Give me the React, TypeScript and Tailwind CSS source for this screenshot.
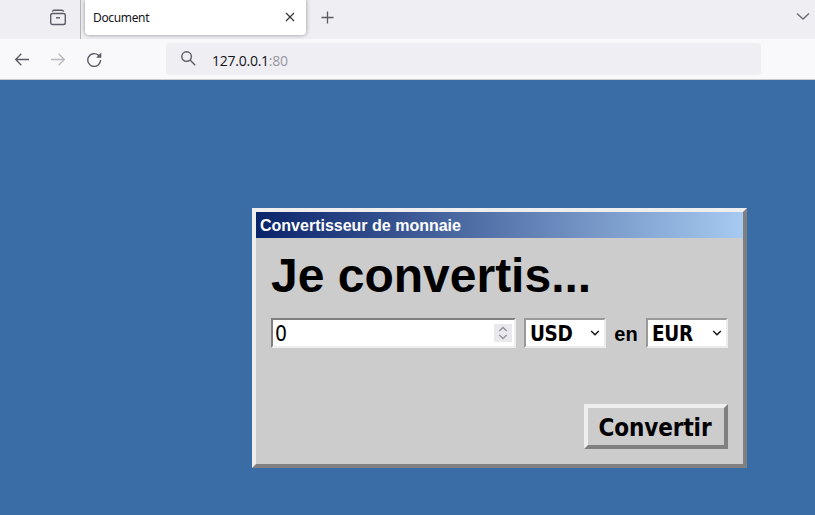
import React from "react";

const tahoma = "font-['DejaVu_Sans_Condensed','DejaVu_Sans',sans-serif] [font-stretch:75%]";

function TabBar() {
  return (
    <div className="flex h-[39px] bg-[#efeef3]">
      <div className="flex w-[81px] shrink-0 justify-end border-r border-[#b5b5ba] pr-[14px] pt-[9px]">
        <svg width="16" height="17" viewBox="0 0 16 17" fill="none" stroke="#5b5b66" strokeWidth="1.4">
          <path d="M2.3 2.5Q2.8 1.2 4.3 1.2H11.7Q13.2 1.2 13.7 2.5" />
          <rect x=".7" y="4.5" width="14.6" height="11" rx="1.8" />
          <path d="M6 8.8H10" />
        </svg>
      </div>
      <div className="ml-1 flex h-[35px] w-[221px] items-center justify-between rounded-b bg-white pl-2 pr-[11px] shadow-[0_0_4px_rgba(0,0,0,0.4)]">
        <span className="text-[12px] tracking-[-0.35px] text-[#15141a] font-['Noto_Sans',sans-serif]">Document</span>
        <svg width="10" height="10" viewBox="0 0 10 10" stroke="#333338" strokeWidth="1.2" className="-mt-px">
          <path d="M1 1L9 9M9 1L1 9" />
        </svg>
      </div>
      <svg width="13" height="13" viewBox="0 0 13 13" stroke="#5b5b66" strokeWidth="1.3" className="ml-[15px] mt-[11px]">
        <path d="M6.5.5V12.5M.5 6.5H12.5" />
      </svg>
      <svg width="14" height="9" viewBox="0 0 14 9" fill="none" stroke="#6b6b75" strokeWidth="1.4" className="ml-auto mr-[5px] mt-[12px]">
        <path d="M1 1.5L7 7L13 1.5" />
      </svg>
    </div>
  );
}

function NavBar() {
  return (
    <div className="flex h-[41px] border-b border-[#cccccf] bg-[#f9f9fb]">
      <div className="flex w-[166px] shrink-0 items-center gap-[22px] pl-[15px]">
        <svg width="14" height="14" viewBox="0 0 14 14" fill="none" stroke="#5b5b66" strokeWidth="1.3">
          <path d="M14 7.5H.8M6.3 1.8L.7 7.5L6.3 13.2" />
        </svg>
        <svg width="14" height="14" viewBox="0 0 14 14" fill="none" stroke="#b9b9bf" strokeWidth="1.3">
          <path d="M0 7.5H13.2M7.7 1.8L13.3 7.5L7.7 13.2" />
        </svg>
        <svg width="15" height="15" viewBox="0 0 15 15" fill="none" stroke="#5b5b66" strokeWidth="1.4">
          <path d="M13.6 8A6.4 6.4 0 1 1 11.3 3.1L12.5 4.2" />
          <path d="M14.3 .6V5.8H9.1Z" fill="#5b5b66" stroke="none" />
        </svg>
      </div>
      <div className="mt-1 flex h-8 w-[595px] items-center rounded bg-[#efeef3] pl-[15px]">
        <svg width="15" height="15" viewBox="0 0 15 15" fill="none" stroke="#5b5b66" strokeWidth="1.4" className="-mt-0.5">
          <circle cx="5.6" cy="5.6" r="4.8" />
          <path d="M9.1 9.1L14.2 14.2" />
        </svg>
        <span className="ml-4 mt-0.5 text-[14px] tracking-[-0.25px] text-[#15141a] font-['Open_Sans',sans-serif]">
          127.0.0.1<span className="text-[#97979f]">:80</span>
        </span>
      </div>
    </div>
  );
}

function Currency({ code }: { code: string }) {
  return (
    <div className="flex h-[30px] w-[82px] items-center justify-between border-2 border-b-[#ececec] border-l-[#999] border-r-[#ececec] border-t-[#999] bg-white pl-[3px] pr-1">
      <span className={`pt-0.5 pl-px text-[20.5px] font-bold leading-6 tracking-[-0.35px] ${tahoma}`}>{code}</span>
      <svg width="10" height="6" viewBox="0 0 10 6" fill="none" stroke="#111" strokeWidth="1.4">
        <path d="M1.2 1L5 4.8L8.8 1" />
      </svg>
    </div>
  );
}

function Converter() {
  return (
    <div className="ml-[252px] mt-32 flex h-[260px] w-[495px] flex-col border-4 border-b-[#808080] border-l-[#eee] border-r-[#808080] border-t-[#eee] bg-[#ccc] text-black font-['Liberation_Sans',Arial,sans-serif]">
      <div className="h-[26px] bg-linear-to-r/srgb from-[#0a246a] to-[#a6caf0] pl-1 text-[16px] font-bold leading-[27px] text-white">
        Convertisseur de monnaie
      </div>
      <div className="flex flex-1 flex-col pl-[15px] pr-[15px]">
        <h1 className="mt-[9px] h-[55px] text-[48px] font-bold leading-[58px]">Je convertis...</h1>
        <div className="mt-4 flex h-[30px]">
          <div className="flex h-[30px] w-[245px] items-center justify-between border-2 border-b-[#eee] border-l-[#808080] border-r-[#eee] border-t-[#808080] bg-white pl-0.5 pr-0.5">
            <span className={`pt-0.5 text-[21px] leading-6 ${tahoma}`}>0</span>
            <div className="flex h-[18px] w-[18px] items-center justify-center bg-[#e9e9ed]">
              <svg width="10" height="14" viewBox="0 0 10 14" fill="none" stroke="#91919a" strokeWidth="1.3">
                <path d="M1.3 5L5 1.5L8.7 5M1.3 9L5 12.5L8.7 9" />
              </svg>
            </div>
          </div>
          <div className="ml-2"><Currency code="USD" /></div>
          <span className="w-10 text-center text-[20px] font-bold leading-[32px]">en</span>
          <Currency code="EUR" />
        </div>
        <div className={`mt-14 flex h-[45px] w-36 items-center justify-center self-end border-4 border-b-[#808080] border-l-[#eee] border-r-[#808080] border-t-[#eee] pt-0.5 pr-0.5 text-[24px] font-bold tracking-[-0.1px] ${tahoma}`}>
          Convertir
        </div>
      </div>
    </div>
  );
}

export default function App() {
  return (
    <div className="h-[515px] w-[815px] overflow-hidden bg-[#3a6da5]">
      <TabBar />
      <NavBar />
      <Converter />
    </div>
  );
}
